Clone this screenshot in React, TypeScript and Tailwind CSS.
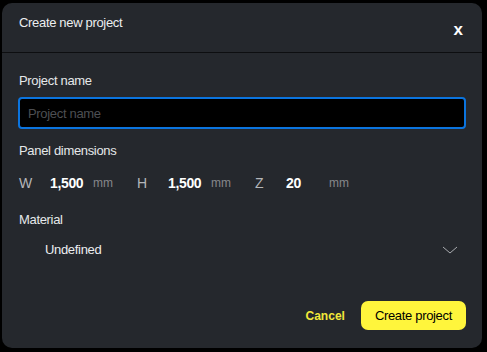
import React, { useState } from 'react';

const font = { fontFamily: '"Liberation Sans", Arial, sans-serif' };

const Dim = ({ label, value }: { label: string; value: string }) => (
  <div className="flex items-center">
    <span className="w-[31px] text-[14px] text-[#b4b6b9]">{label}</span>
    <span className="w-[43px] text-[14px] font-bold text-white tracking-tight">{value}</span>
    <span className="w-[44px] text-[12px] text-[#85878b]">mm</span>
  </div>
);

export default function App() {
  const [name, setName] = useState('');

  return (
    <div className="w-[487px] h-[352px] bg-black pt-[3px] pl-[2px]" style={font}>
      <div className="w-[480px] h-[345px] bg-[#25282d] rounded-[10px] flex flex-col">
        {/* Header */}
        <div className="h-[50px] border-b border-[#0d0e10] flex items-start justify-between pl-[17px] pr-[19px]">
          <h2 className="mt-[10px] text-[13px] text-[#eceef0] tracking-tight">Create new project</h2>
          <button className="mt-[18px] text-[17px] font-bold text-white leading-none">x</button>
        </div>

        {/* Body */}
        <div className="flex flex-col px-[16px] pt-[19px]">
          <label className="text-[13px] text-[#e6e8ea] tracking-tight leading-[18px] pl-[1px]">Project name</label>
          <input
            value={name}
            onChange={(e) => setName(e.target.value)}
            placeholder="Project name"
            className="mt-[7px] h-[32px] w-[448px] bg-black border-2 border-[#0b74de] rounded-[4px] px-[8px] text-[13px] text-white placeholder:text-[#4d4f53] outline-none tracking-tight"
          />

          <label className="mt-[13px] text-[13px] text-[#e6e8ea] tracking-tight leading-[18px] pl-[1px]">Panel dimensions</label>
          <div className="mt-[14px] flex items-center pl-[1px] h-[18px]">
            <Dim label="W" value="1,500" />
            <Dim label="H" value="1,500" />
            <Dim label="Z" value="20" />
          </div>

          <label className="mt-[19px] text-[13px] text-[#e6e8ea] tracking-tight leading-[18px] pl-[1px]">Material</label>
          <div className="mt-[6px] h-[30px] flex items-center justify-between pl-[27px] pr-[8px]">
            <span className="text-[13px] text-[#eceef0] tracking-tight">Undefined</span>
            <svg width="16" height="8" viewBox="0 0 16 8" fill="none">
              <path d="M1 1L8 7L15 1" stroke="#a9abaf" strokeWidth="1" />
            </svg>
          </div>
        </div>

        {/* Footer */}
        <div className="mt-auto mb-[18px] flex items-center justify-end gap-[16px] pr-[16px]">
          <button className="text-[12px] font-bold text-[#f3e83a]">Cancel</button>
          <button className="h-[29px] px-[14px] rounded-[7px] bg-[#fff53c] text-[13px] text-black tracking-tight">
            Create project
          </button>
        </div>
      </div>
    </div>
  );
}
